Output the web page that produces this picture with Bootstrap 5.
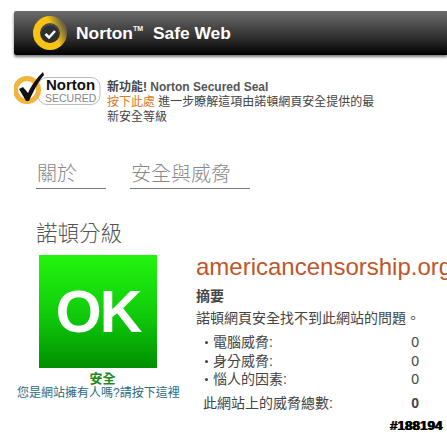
<!DOCTYPE html>
<html lang="zh-Hant">
<head>
    <meta charset="UTF-8">
    <title>Norton Safe Web</title>
    <meta name="viewport" content="width=device-width, initial-scale=1">
    <link href="https://cdn.jsdelivr.net/npm/bootstrap@5.3.3/dist/css/bootstrap.min.css" rel="stylesheet">
    <style>
        html, body { overflow: hidden; }
        body { background: #fff; font-family: "Liberation Sans", "Noto Sans CJK TC", sans-serif; font-size: 12px; line-height: 15px; color: #444; }
        .page-wrap { height: 433px; padding-top: 11px; }
        .nsw-bar { margin-left: 14px; height: 44px; padding-left: 18px; background: linear-gradient(#6c6c6c, #2e2e2e 62%, #000); border-radius: 2px 0 0 2px; box-shadow: 0 2px 3px #777; color: #fff; font-size: 17.400px; font-weight: 700; }
        .nsw-bar sup { font-size: 7px; top: -8px; margin-right: 5px; }
        .seal-row { margin: 17px 0 0 14px; }
        .seal-text { width: 272px; margin-left: 6px; padding-top: 8px; }
        .seal-text a { color: #d97a2b; text-decoration: none; }
        .seal-name { color: #555; font-weight: 700; }
        .tab-row { margin: 36px 0 0 36px; gap: 24px; }
        .tab-item { font-size: 20px; line-height: 26px; color: #888; font-weight: 300; border-bottom: 1px solid #777; padding: 0 0 1px 1px; }
        .tab-one { width: 70px; }
        .tab-two { width: 120px; }
        .rating-col { width: 196px; flex: none; }
        .rating-title { margin: 31px 0 0 36px; font-size: 21.500px; line-height: 28px; color: #555; font-weight: 300; }
        .ok-box { margin: 7px 0 0 39px; width: 118px; height: 113px; padding-top: 2px; background: linear-gradient(#23f50e, #0fc90a 55%, #008f00); font-size: 59px; font-weight: 700; color: #fff; line-height: 1; letter-spacing: -2px; }
        .safe-label { margin-top: 3px; font-size: 13px; line-height: 15px; font-weight: 700; color: #1d8a1d; text-align: center; padding-left: 9px; }
        .owner-link { display: block; margin: 0 0 0 17px; color: #2b6b82; text-decoration: none; white-space: nowrap; }
        .site-col { padding-top: 63px; min-width: 0; flex: 1; overflow: hidden; }
        .site-name { font-size: 24px; line-height: 30px; color: #c0552b; white-space: nowrap; }
        .sum-title { margin-top: 5px; font-size: 14px; line-height: 18px; font-weight: 700; }
        .sum-line { margin-top: 4px; font-size: 14px; line-height: 18px; }
        .threat-first { margin-top: 6px; }
        .threat-row { height: 18.500px; width: 223px; font-size: 14px; line-height: 18px; padding-left: 17px; position: relative; }
        .threat-row::before { content: ""; width: 3px; height: 3px; border-radius: 50%; background: #444; position: absolute; left: 9px; top: 8px; }
        .threat-total { margin-top: 5px; height: 18px; width: 223px; font-size: 14px; line-height: 18px; padding-left: 7px; }
        .threat-total b { font-weight: 700; }
        .ref-num { margin: 8px 5px 0 0; text-align: right; font-size: 13.500px; line-height: 12px; font-weight: 700; color: #000; text-shadow: 1px 0 0 #000; }
    </style>
</head>
<body>
<div class="page-wrap">
    <div class="nsw-bar d-flex align-items-center">
        <svg width="36" height="36" viewBox="0 0 36 36" class="me-2 flex-shrink-0">
            <defs>
                <linearGradient id="ringFade" x1="0.1" y1="0.6" x2="1" y2="0.2">
                    <stop offset="0.55" stop-color="#f7c415"/>
                    <stop offset="1" stop-color="#6d6340"/>
                </linearGradient>
            </defs>
            <circle cx="18" cy="18" r="13.500" fill="none" stroke="url(#ringFade)" stroke-width="7"/>
            <circle cx="18" cy="19" r="8.500" fill="#2f2f2f"/>
            <path d="M13.500 19l3.500 3.500 6-6.500" fill="none" stroke="#fff" stroke-width="2.500"/>
        </svg>
        <span>Norton<sup>TM</sup> Safe Web</span>
    </div>

    <div class="seal-row d-flex">
        <svg width="87" height="37" viewBox="0 0 87 37" class="flex-shrink-0">
            <rect x="24" y="5.500" width="62" height="27" rx="9" fill="#fff" stroke="#bbb"/>
            <circle cx="13" cy="18" r="11.500" fill="#fff" stroke="#f3b33d" stroke-width="5"/>
            <path d="M5 17l4-2 5 6C18 12 23 6 29 0l1 3C24 10 19 20 15 29h-3z" fill="#111"/>
            <text x="32" y="18" font-family="Liberation Sans" font-size="15" font-weight="700" fill="#111">Norton</text>
            <text x="31" y="30" font-family="Liberation Sans" font-size="10.500" fill="#888">SECURED</text>
        </svg>
        <div class="seal-text">
            <div><b>新功能!</b> <span class="seal-name">Norton Secured Seal</span></div>
            <div><a href="#">按下此處</a> 進一步瞭解這項由諾頓網頁安全提供的最新安全等級</div>
        </div>
    </div>

    <div class="tab-row d-flex">
        <div class="tab-item tab-one">關於</div>
        <div class="tab-item tab-two">安全與威脅</div>
    </div>

    <div class="d-flex">
        <div class="rating-col">
            <div class="rating-title">諾頓分級</div>
            <div class="ok-box d-flex align-items-center justify-content-center">OK</div>
            <div class="safe-label">安全</div>
            <a class="owner-link" href="#">您是網站擁有人嗎?請按下這裡</a>
        </div>
        <div class="site-col">
            <div class="site-name">americancensorship.org</div>
            <div class="sum-title">摘要</div>
            <div class="sum-line">諾頓網頁安全找不到此網站的問題。</div>
            <div class="threat-row threat-first d-flex justify-content-between"><span>電腦威脅:</span><span>0</span></div>
            <div class="threat-row d-flex justify-content-between"><span>身分威脅:</span><span>0</span></div>
            <div class="threat-row d-flex justify-content-between"><span>惱人的因素:</span><span>0</span></div>
            <div class="threat-total d-flex justify-content-between"><span>此網站上的威脅總數:</span><b>0</b></div>
            <div class="ref-num">#188194</div>
        </div>
    </div>
</div>
<script src="https://cdn.jsdelivr.net/npm/bootstrap@5.3.3/dist/js/bootstrap.bundle.min.js"></script>
</body>
</html>
